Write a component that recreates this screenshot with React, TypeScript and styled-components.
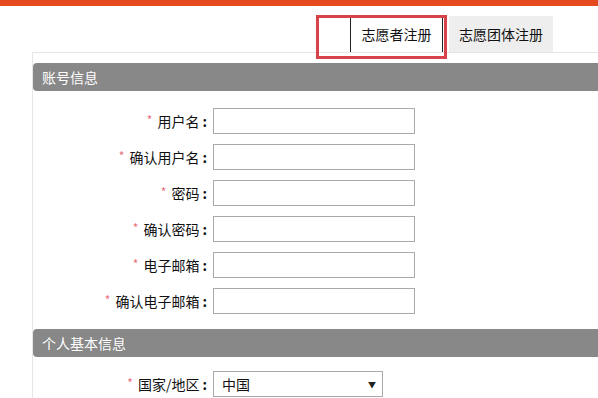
import React from 'react';
import styled, {createGlobalStyle} from "styled-components";

const GlobalStyle = createGlobalStyle`
  html, body {
    margin: 0;
    padding: 0;
    background: #ffffff;
    overflow: hidden;
  }
  body {
    font-family: "Noto Sans CJK SC", "Noto Sans", sans-serif;
    font-size: 14px;
    color: #222;
  }
`;

const accountFields = ["用户名", "确认用户名", "密码", "确认密码", "电子邮箱", "确认电子邮箱"];

const App = () => {
    return (
        <>
            <GlobalStyle/>
            <Page>
                <TopBar/>
                <TabRow>
                    <Marker/>
                    <Tab active>志愿者注册</Tab>
                    <Tab>志愿团体注册</Tab>
                </TabRow>
                <Panel>
                    <SectionHeader>账号信息</SectionHeader>
                    <Form>
                        {accountFields.map((f) => (
                            <React.Fragment key={f}>
                                <Label><Star>*</Star>{f}<Colon>:</Colon></Label>
                                <Input type="text"/>
                            </React.Fragment>
                        ))}
                    </Form>
                    <SectionHeader>个人基本信息</SectionHeader>
                    <Form top={14}>
                        <Label><Star>*</Star>国家/地区<Colon>:</Colon></Label>
                        <Select>
                            <span>中国</span>
                            <Arrow>▼</Arrow>
                        </Select>
                    </Form>
                </Panel>
            </Page>
        </>
    );
};

const Page = styled.div`
  width: 598px;
  height: 398px;
  overflow: hidden;
`

const TopBar = styled.div`
  height: 6px;
  background: #e44a1d;
`

const TabRow = styled.div`
  position: relative;
  display: flex;
  gap: 6px;
  margin-top: 10px;
  padding-left: 350px;
  height: 36px;
`

const Marker = styled.div`
  position: absolute;
  left: 316px;
  top: -1px;
  width: 125px;
  height: 38px;
  border: 3px solid #d8434a;
  pointer-events: none;
`

const Tab = styled.div<{active?: boolean}>`
  display: flex;
  align-items: center;
  justify-content: center;
  height: 36px;
  box-sizing: border-box;
  padding: 0 10px;
  font-size: 14px;
  color: #111;
  background: ${(props) => props.active ? `#ffffff` : `#eeeeee`};
  border-left: ${(props) => props.active ? `1px solid #222` : `none`};
  border-right: ${(props) => props.active ? `1px solid #222` : `none`};
  width: ${(props) => props.active ? `93px` : `104px`};
`

const Panel = styled.div`
  margin-left: 32px;
  border-top: 1px solid #e6e6e6;
  border-left: 1px solid #e6e6e6;
  padding-top: 10px;
  min-height: 400px;
`

const SectionHeader = styled.div`
  height: 28px;
  line-height: 28px;
  background: #888888;
  color: #ffffff;
  font-size: 14px;
  padding-left: 9px;
  border-top-left-radius: 4px;
  border-bottom-left-radius: 4px;
`

const Form = styled.div<{top?: number}>`
  display: grid;
  grid-template-columns: 174px 202px;
  column-gap: 6px;
  row-gap: 10px;
  padding: ${(props) => props.top ?? 17}px 0 15px;
  align-items: center;
`

const Label = styled.div`
  text-align: right;
  font-size: 14px;
  color: #111;
  white-space: nowrap;
`

const Colon = styled.span`
  font-weight: bold;
  margin-left: 3px;
`

const Star = styled.span`
  color: #e8707a;
  font-size: 12px;
  margin-right: 5px;
  position: relative;
  top: -2px;
`

const Input = styled.input`
  box-sizing: border-box;
  width: 202px;
  height: 26px;
  margin: 0;
  border: 1px solid #aaaaaa;
  outline: none;
  background: #fff;
`

const Select = styled.div`
  box-sizing: border-box;
  width: 170px;
  height: 26px;
  border: 1px solid #aaaaaa;
  display: flex;
  align-items: center;
  justify-content: space-between;
  padding: 0 6px 0 8px;
  font-size: 14px;
  color: #111;
`

const Arrow = styled.span`
  font-size: 8px;
  color: #222;
`

export default App;
